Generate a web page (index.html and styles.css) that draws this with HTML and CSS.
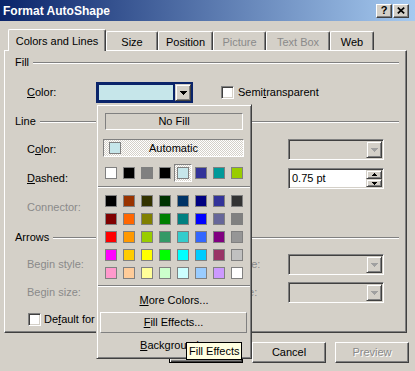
FILE: index.html
```html
<!DOCTYPE html>
<html>
<head>
<meta charset="utf-8">
<link rel="stylesheet" href="styles.css">
</head>
<body>
<div class="window">
  <div class="titlebar">
    <span class="title">Format AutoShape</span>
    <div class="tbtns">
      <span class="tbtn">?</span>
      <span class="tbtn"><svg width="8" height="7" viewBox="0 0 8 7"><path d="M0.8 0.6l6.4 5.8M7.2 0.6l-6.4 5.8" stroke="#000" stroke-width="1.7"/></svg></span>
    </div>
  </div>
  <div class="client">
    <div class="tabs">
      <div class="tab sel t-cl">Colors and Lines</div>
      <div class="tab t-size">Size</div>
      <div class="tab t-pos">Position</div>
      <div class="tab dis t-pic">Picture</div>
      <div class="tab dis t-tb">Text Box</div>
      <div class="tab t-web">Web</div>
    </div>
    <div class="panel">
      <div class="group g-fill">
        <div class="legend"><span>Fill</span><i class="rule"></i></div>
        <span class="lbl"><u>C</u>olor:</span>
        <div class="combo focus"><div class="field"><span class="chosen"></span></div><span class="dbtn"><svg width="7" height="4" viewBox="0 0 7 4"><path d="M0 0h7v1h-1v1h-1v1h-1v1h-1v-1h-1v-1h-1v-1h-1z" fill="#000"/></svg></span></div>
        <label class="check semi"><span class="box"></span><span>Semi<u>t</u>ransparent</span></label>
      </div>
      <div class="group g-line">
        <div class="legend"><span>Line</span><i class="rule"></i></div>
        <span class="lbl">C<u>o</u>lor:</span>
        <div class="combo"><div class="field"></div><span class="dbtn"><svg width="7" height="4" viewBox="0 0 7 4"><path d="M0 0h7v1h-1v1h-1v1h-1v1h-1v-1h-1v-1h-1v-1h-1z" fill="#000"/></svg></span></div>
        <span class="rlbl"><u>S</u>tyle:</span>
        <div class="combo off"><div class="field"></div><span class="dbtn"><svg width="7" height="4" viewBox="0 0 7 4"><path d="M0 0h7v1h-1v1h-1v1h-1v1h-1v-1h-1v-1h-1v-1h-1z" fill="#a0a0a0"/></svg></span></div>
        <span class="lbl"><u>D</u>ashed:</span>
        <div class="combo"><div class="field"></div><span class="dbtn"><svg width="7" height="4" viewBox="0 0 7 4"><path d="M0 0h7v1h-1v1h-1v1h-1v1h-1v-1h-1v-1h-1v-1h-1z" fill="#000"/></svg></span></div>
        <span class="rlbl"><u>W</u>eight:</span>
        <div class="combo spin"><div class="field">0.75 pt</div><div class="spinbtns"><span class="sbtn up"><svg width="5" height="3" viewBox="0 0 5 3"><path d="M2 0h1v1h1v1h1v1h-5v-1h1v-1h1z" fill="#000"/></svg></span><span class="sbtn down"><svg width="5" height="3" viewBox="0 0 5 3"><path d="M0 0h5v1h-1v1h-1v1h-1v-1h-1v-1h-1z" fill="#000"/></svg></span></div></div>
        <span class="lbl dis">Connector:</span>
        <div class="combo off"><div class="field"></div><span class="dbtn"><svg width="7" height="4" viewBox="0 0 7 4"><path d="M0 0h7v1h-1v1h-1v1h-1v1h-1v-1h-1v-1h-1v-1h-1z" fill="#a0a0a0"/></svg></span></div>
      </div>
      <div class="group g-arrows">
        <div class="legend"><span>Arrows</span><i class="rule"></i></div>
        <span class="lbl dis">Begin style:</span>
        <div class="combo off"><div class="field"></div><span class="dbtn"><svg width="7" height="4" viewBox="0 0 7 4"><path d="M0 0h7v1h-1v1h-1v1h-1v1h-1v-1h-1v-1h-1v-1h-1z" fill="#a0a0a0"/></svg></span></div>
        <span class="rlbl dis">End style:</span>
        <div class="combo off"><div class="field"></div><span class="dbtn"><svg width="7" height="4" viewBox="0 0 7 4"><path d="M0 0h7v1h-1v1h-1v1h-1v1h-1v-1h-1v-1h-1v-1h-1z" fill="#a0a0a0"/></svg></span></div>
        <span class="lbl dis">Begin size:</span>
        <div class="combo off"><div class="field"></div><span class="dbtn"><svg width="7" height="4" viewBox="0 0 7 4"><path d="M0 0h7v1h-1v1h-1v1h-1v1h-1v-1h-1v-1h-1v-1h-1z" fill="#a0a0a0"/></svg></span></div>
        <span class="rlbl dis">End size:</span>
        <div class="combo off"><div class="field"></div><span class="dbtn"><svg width="7" height="4" viewBox="0 0 7 4"><path d="M0 0h7v1h-1v1h-1v1h-1v1h-1v-1h-1v-1h-1v-1h-1z" fill="#a0a0a0"/></svg></span></div>
      </div>
      <label class="check default"><span class="box"></span><span>De<u>f</u>ault for new objects</span></label>
    </div>
    <div class="buttons">
      <span class="btn def">OK</span>
      <span class="btn">Cancel</span>
      <span class="btn dis">Preview</span>
    </div>
  </div>

  <div class="popup">
    <div class="nofill">No Fill</div>
    <div class="auto"><span class="asw"></span><span class="atext">Automatic</span></div>
    <div class="cells recent">
      <span class="cell"><i class="sw" style="background:#ffffff"></i></span>
      <span class="cell"><i class="sw" style="background:#000000"></i></span>
      <span class="cell"><i class="sw" style="background:#808080"></i></span>
      <span class="cell"><i class="sw" style="background:#000000"></i></span>
      <span class="cell on"><i class="sw" style="background:#c6e6ea"></i></span>
      <span class="cell"><i class="sw" style="background:#333399"></i></span>
      <span class="cell"><i class="sw" style="background:#009999"></i></span>
      <span class="cell"><i class="sw" style="background:#99cc00"></i></span>
    </div>
    <div class="sep"></div>
    <div class="cells main">
      <span class="cell"><i class="sw" style="background:#000000"></i></span>
      <span class="cell"><i class="sw" style="background:#993300"></i></span>
      <span class="cell"><i class="sw" style="background:#333300"></i></span>
      <span class="cell"><i class="sw" style="background:#003300"></i></span>
      <span class="cell"><i class="sw" style="background:#003366"></i></span>
      <span class="cell"><i class="sw" style="background:#000080"></i></span>
      <span class="cell"><i class="sw" style="background:#333399"></i></span>
      <span class="cell"><i class="sw" style="background:#333333"></i></span>
      <span class="cell"><i class="sw" style="background:#800000"></i></span>
      <span class="cell"><i class="sw" style="background:#ff6600"></i></span>
      <span class="cell"><i class="sw" style="background:#808000"></i></span>
      <span class="cell"><i class="sw" style="background:#008000"></i></span>
      <span class="cell"><i class="sw" style="background:#008080"></i></span>
      <span class="cell"><i class="sw" style="background:#0000ff"></i></span>
      <span class="cell"><i class="sw" style="background:#666699"></i></span>
      <span class="cell"><i class="sw" style="background:#808080"></i></span>
      <span class="cell"><i class="sw" style="background:#ff0000"></i></span>
      <span class="cell"><i class="sw" style="background:#ff9900"></i></span>
      <span class="cell"><i class="sw" style="background:#99cc00"></i></span>
      <span class="cell"><i class="sw" style="background:#339966"></i></span>
      <span class="cell"><i class="sw" style="background:#33cccc"></i></span>
      <span class="cell"><i class="sw" style="background:#3366ff"></i></span>
      <span class="cell"><i class="sw" style="background:#800080"></i></span>
      <span class="cell"><i class="sw" style="background:#969696"></i></span>
      <span class="cell"><i class="sw" style="background:#ff00ff"></i></span>
      <span class="cell"><i class="sw" style="background:#ffcc00"></i></span>
      <span class="cell"><i class="sw" style="background:#ffff00"></i></span>
      <span class="cell"><i class="sw" style="background:#00ff00"></i></span>
      <span class="cell"><i class="sw" style="background:#00ffff"></i></span>
      <span class="cell"><i class="sw" style="background:#00ccff"></i></span>
      <span class="cell"><i class="sw" style="background:#993366"></i></span>
      <span class="cell"><i class="sw" style="background:#c0c0c0"></i></span>
      <span class="cell"><i class="sw" style="background:#ff99cc"></i></span>
      <span class="cell"><i class="sw" style="background:#ffcc99"></i></span>
      <span class="cell"><i class="sw" style="background:#ffff99"></i></span>
      <span class="cell"><i class="sw" style="background:#ccffcc"></i></span>
      <span class="cell"><i class="sw" style="background:#ccffff"></i></span>
      <span class="cell"><i class="sw" style="background:#99ccff"></i></span>
      <span class="cell"><i class="sw" style="background:#cc99ff"></i></span>
      <span class="cell"><i class="sw" style="background:#ffffff"></i></span>
    </div>
    <div class="sep"></div>
    <div class="item more"><span><u>M</u>ore Colors...</span></div>
    <div class="item effects"><span><u>F</u>ill Effects...</span></div>
    <div class="item bgnd"><span><u>B</u>ackground...</span></div>
  </div>
  <div class="tip">Fill Effects</div>
</div>
</body>
</html>
```

FILE: styles.css
```css
* { box-sizing: border-box; }
html, body { margin: 0; padding: 0; }
body {
  width: 415px;
  height: 371px;
  overflow: hidden;
  background: #d4d0c8;
  font: 11px/13px "Liberation Sans", Arial, sans-serif;
  color: #000;
}
u { text-decoration: underline; text-underline-offset: 1px; }
.window { position: relative; width: 415px; height: 371px; }

/* title bar */
.titlebar {
  height: 21px;
  display: flex;
  align-items: center;
  justify-content: space-between;
  padding: 0 6px 0 3px;
  background: linear-gradient(90deg, #0a246a 0%, #a6caf0 100%);
}
.title { color: #fff; font-weight: bold; font-size: 12px; padding-top: 2px; }
.tbtns { display: flex; gap: 1px; }
.tbtn {
  width: 16px;
  height: 14px;
  background: #d4d0c8;
  border: 1px solid;
  border-color: #fff #404040 #404040 #fff;
  box-shadow: inset -1px -1px #808080;
  display: flex;
  align-items: center;
  justify-content: center;
  font-weight: bold;
  font-size: 11px;
  line-height: 1;
}

/* tabs */
.client { padding-top: 8px; }
.tabs { display: flex; align-items: flex-end; height: 21px; padding-left: 8px; }
.tab {
  height: 19px;
  padding-top: 2px;
  display: flex;
  align-items: center;
  justify-content: center;
  border-top: 1px solid #fff;
  border-left: 1px solid #fff;
  border-right: 1px solid #404040;
  box-shadow: inset -1px 0 #808080;
  border-radius: 2px 2px 0 0;
  white-space: nowrap;
}
.tab.sel { height: 22px; margin-bottom: -1px; position: relative; z-index: 1; background: #d4d0c8; }
.tab.dis { color: #8a8a8a; }
.t-cl { width: 98px; }
.t-size { width: 52px; }
.t-pos { width: 55px; }
.t-pic { width: 53px; }
.t-tb { width: 64px; }
.t-web { width: 44px; }

/* panel */
.panel {
  margin-left: 4px;
  width: 403px;
  height: 283px;
  border: 1px solid;
  border-color: #fff #404040 #404040 #fff;
  box-shadow: inset -1px -1px #808080;
  padding: 1px 7px 0 10px;
  display: flex;
  flex-direction: column;
}
.group {
  display: grid;
  grid-template-columns: 12px 69px 97px 19px 76px 1fr;
  grid-template-rows: 20px;
  grid-auto-rows: 21px;
  align-items: center;
}
.g-fill { grid-template-rows: 21px; row-gap: 9px; }
.g-line { margin-top: 8px; row-gap: 8px; }
.g-arrows { margin-top: 9px; row-gap: 7px; }
.legend { grid-column: 1 / -1; display: flex; align-items: center; height: 100%; }
.rule {
  flex: 1;
  height: 2px;
  margin: 1px 0 0 4px;
  border-top: 1px solid #808080;
  border-bottom: 1px solid #fff;
}
.lbl { grid-column: 2; white-space: nowrap; }
.rlbl { grid-column: 5; white-space: nowrap; }
.dis { color: #8a8a8a; }

/* combos */
.combo {
  width: 96px;
  height: 21px;
  display: flex;
  padding: 1px;
  border: 1px solid;
  border-color: #808080 #fff #fff #808080;
  box-shadow: inset 1px 1px #404040, inset -1px -1px #d4d0c8;
  background: #fff;
}
.combo.off { background: #d4d0c8; }
.g-fill .combo { width: 97px; }
.field { flex: 1; min-width: 0; display: flex; align-items: center; padding-left: 2px; }
.combo.focus { border-color: #0a246a; box-shadow: none; background: #0a246a; padding: 2px 1px 2px 2px; }
.combo.focus .field { padding: 0; background: #0a246a; }
.chosen { display: block; width: 100%; height: 100%; background: #c6e6ea; margin-right: 2px; }
.combo.focus .dbtn { height: 17px; margin-top: -1px; }
.dbtn, .sbtn {
  width: 16px;
  height: 17px;
  background: #d4d0c8;
  border: 1px solid;
  border-color: #d4d0c8 #404040 #404040 #d4d0c8;
  box-shadow: inset 1px 1px #fff, inset -1px -1px #808080;
  display: flex;
  align-items: center;
  justify-content: center;
}
.dbtn svg { display: block; }
.spinbtns { width: 16px; display: flex; flex-direction: column; }
.sbtn { height: 9px; }
.sbtn.down { height: 8px; }
.sbtn svg { display: block; }

/* checkboxes */
.check { display: flex; align-items: center; white-space: nowrap; }
.box {
  width: 13px;
  height: 13px;
  flex: none;
  border: 1px solid;
  border-color: #808080 #fff #fff #808080;
  box-shadow: inset 1px 1px #404040, inset -1px -1px #d4d0c8;
  background: #fff;
}
.semi { grid-column: 4 / -1; padding-left: 28px; gap: 4px; }
.default { margin-top: 6px; height: 21px; padding-left: 13px; gap: 3px; }

/* buttons */
.buttons { display: flex; justify-content: flex-end; gap: 9px; padding-right: 6px; margin-top: 9px; }
.btn {
  width: 74px;
  height: 21px;
  display: flex;
  align-items: center;
  justify-content: center;
  border: 1px solid;
  border-color: #fff #404040 #404040 #fff;
  box-shadow: inset -1px -1px #808080;
}
.btn.def { border-color: #000; box-shadow: inset 1px 1px #fff, inset -1px -1px #404040, inset -2px -2px #808080; }
.btn.dis { color: #8a8a8a; text-shadow: 1px 1px #fff; }

/* popup palette */
.popup {
  position: absolute;
  left: 96px;
  top: 104px;
  width: 156px;
  height: 255px;
  z-index: 5;
  background: #d4d0c8;
  border: 1px solid;
  border-color: #d4d0c8 #404040 #404040 #d4d0c8;
  box-shadow: inset 1px 1px #fff, inset -1px -1px #808080;
  padding: 1px;
  display: flex;
  flex-direction: column;
}
.nofill {
  margin: 7px 7px 0 7px;
  height: 17px;
  border: 1px solid;
  border-color: #808080 #fff #fff #808080;
  display: flex;
  align-items: center;
  justify-content: center;
}
.dither { background: repeating-conic-gradient(#fff 0 25%, #d4d0c8 0 50%) 0 0 / 2px 2px; }
.auto {
  margin: 9px 6px 0 5px;
  height: 18px;
  border: 1px solid;
  border-color: #808080 #fff #fff #808080;
  background: repeating-conic-gradient(#fff 0 25%, #d4d0c8 0 50%) 0 0 / 2px 2px;
  display: grid;
  grid-template-columns: 18px 1fr 18px;
  align-items: center;
}
.asw { width: 12px; height: 12px; margin-left: 5px; border: 1px solid #808080; background: #c6e6ea; }
.atext { text-align: center; }
.cells { display: grid; grid-template-columns: repeat(8, 18px); grid-auto-rows: 18px; margin-left: 4px; }
.recent { margin-top: 7px; }
.main { margin-top: 4px; }
.cell { display: flex; align-items: center; justify-content: center; }
.cell.on {
  border: 1px solid;
  border-color: #808080 #fff #fff #808080;
  background: repeating-conic-gradient(#fff 0 25%, #d4d0c8 0 50%) 0 0 / 2px 2px;
}
.sw { display: block; width: 12px; height: 12px; border: 1px solid #808080; }
.sep { height: 2px; margin-top: 4px; border-top: 1px solid #808080; border-bottom: 1px solid #fff; }
.main + .sep { margin-top: 3px; }
.item { display: flex; align-items: center; justify-content: center; }
.more { margin-top: 3px; height: 20px; }
.effects {
  margin: 2px 3px 0 2px;
  height: 21px;
  border: 1px solid;
  border-color: #fff #808080 #808080 #fff;
}
.bgnd { margin-top: 2px; height: 20px; }

/* tooltip */
.tip {
  position: absolute;
  left: 186px;
  top: 342px;
  width: 56px;
  height: 18px;
  z-index: 6;
  background: #ffffe1;
  border: 1px solid #000;
  padding-left: 2px;
  display: flex;
  align-items: center;
  white-space: nowrap;
}
```
